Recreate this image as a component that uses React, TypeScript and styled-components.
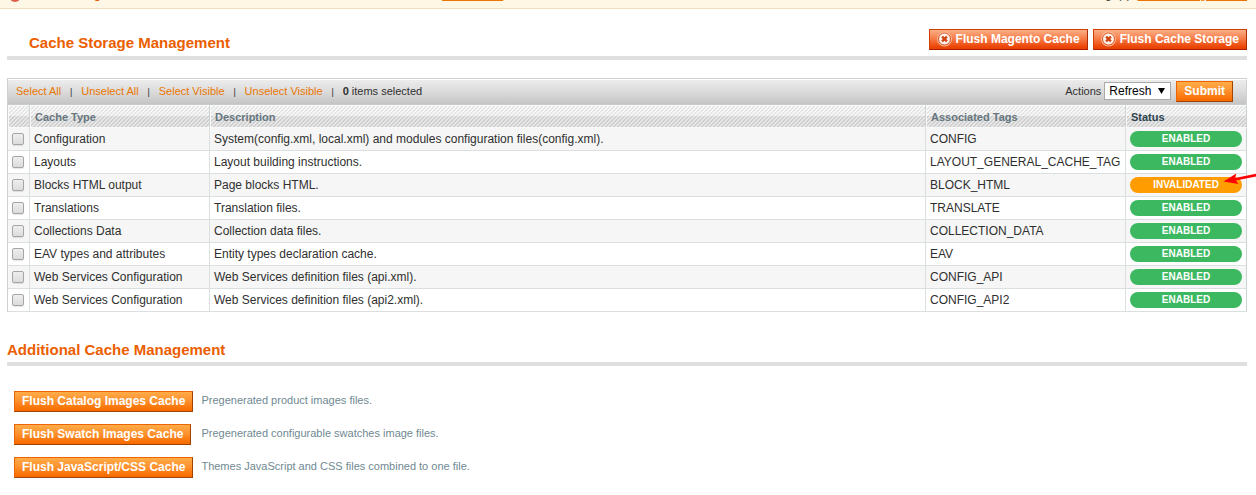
import React, { useState } from 'react';
import styled, { createGlobalStyle } from 'styled-components';

const GlobalStyle = createGlobalStyle`
  *, *::before, *::after { box-sizing: border-box; }
  body {
    margin: 0;
    background: #fff;
    color: #2f2f2f;
    font: 12px/16px "Liberation Sans", Arial, Helvetica, sans-serif;
  }
`;

const Notice = styled.div`
  display: flex;
  justify-content: space-between;
  align-items: flex-end;
  height: 9px;
  padding: 0 9px 6px;
  overflow: hidden;
  background: #fff7e5;
  border-bottom: 1px solid #f0dfb8;
  font-size: 11px;
  line-height: 14px;
  white-space: nowrap;
`;

const NoticeGroup = styled.div`
  display: flex;
  align-items: flex-end;
  gap: 4px;
`;

const NoticeDot = styled.span`
  width: 12px;
  height: 14px;
  border: 2px solid #d8604c;
  border-radius: 6px;
`;

const NoticeTitle = styled.strong`
  width: 413px;
  color: #eb5e00;
`;

const TextLink = styled.a`
  color: #ea7601;
  text-decoration: ${(p: { $underlined?: boolean }) => (p.$underlined ? 'underline' : 'none')};
`;

const Main = styled.main`
  padding: 20px 9px 14px 7px;
`;

const SectionHead = styled.header<{ $indent?: boolean }>`
  display: flex;
  justify-content: space-between;
  align-items: flex-start;
  padding-left: ${(p) => (p.$indent ? 22 : 0)}px;
  padding-bottom: ${(p) => (p.$indent ? 3 : 2)}px;
  border-bottom: 4px solid #dfdfdf;
`;

const Title = styled.h3`
  margin: 0;
  padding-top: 4px;
  color: #eb5e00;
  font-size: 15px;
  line-height: 20px;
`;

const ButtonGroup = styled.div`
  display: flex;
  gap: 5px;
`;

const Button = styled.button<{ $danger?: boolean }>`
  display: inline-flex;
  align-items: center;
  justify-self: start;
  gap: 4px;
  height: 21px;
  padding: 0 7px 1px;
  border: 1px solid;
  border-color: ${(p) => (p.$danger ? '#d13f00 #b02b00 #a92000 #d13f00' : '#ed6502 #a04300 #a04300 #ed6502')};
  background: ${(p) =>
    p.$danger
      ? 'linear-gradient(#fbae85 0%, #f77d49 45%, #ec4a0c 85%, #e84000 100%)'
      : 'linear-gradient(#ffac47 0%, #fd9230 45%, #f97408 85%, #f56a00 100%)'};
  color: #fff;
  font: bold 12px/16px "Liberation Sans", Arial, Helvetica, sans-serif;
  white-space: nowrap;
  cursor: pointer;
`;

const Grid = styled.section`
  margin-top: 18px;
  border: solid #ccd1d1;
  border-width: 1px 0 0 1px;
`;

const Toolbar = styled.div`
  display: flex;
  justify-content: space-between;
  align-items: center;
  height: 26px;
  padding: 0 13px 3px 8px;
  border-top: 1px solid #fff;
  border-right: 1px solid #ccd1d1;
  background: linear-gradient(#ececec 0%, #dcdcdc 45%, #c5c5c5 96%, #ccd1d1 100%);
  font-size: 11px;
`;

const SelectLinks = styled.div`
  display: flex;
  align-items: center;
`;

const Divider = styled.span`
  width: 20px;
  padding-top: 1px;
  font-size: 9px;
  text-align: center;
`;

const Actions = styled.div`
  display: flex;
  align-items: center;
  gap: 5px;
`;

const ActionField = styled.div`
  display: flex;
  align-items: center;
  gap: 3px;
`;

const SelectBox = styled.span`
  position: relative;
  display: flex;
`;

const Select = styled.select`
  appearance: none;
  width: 67px;
  height: 18px;
  padding: 0 4px;
  border: 1px solid #aaa;
  border-radius: 0;
  background: #fff;
  color: #000;
  font: 12px/16px "Liberation Sans", Arial, Helvetica, sans-serif;
`;

const Caret = styled.svg`
  position: absolute;
  top: 6px;
  right: 6px;
  pointer-events: none;
`;

const Table = styled.table`
  width: 100%;
  table-layout: fixed;
  border-collapse: separate;
  border-spacing: 0;
`;

const HeadCell = styled.th<{ $dark?: boolean }>`
  height: 23px;
  padding: 1px 4px 0;
  border: solid;
  border-width: 1px 1px 1px 1px;
  border-color: #f9f9f9 #ccd1d1 #f9f9f9 #f9f9f9;
  background:
    linear-gradient(
      135deg,
      rgba(255, 255, 255, 0.45) 0 25%,
      rgba(170, 170, 170, 0.16) 25% 50%,
      rgba(255, 255, 255, 0.45) 50% 75%,
      rgba(170, 170, 170, 0.16) 75%
    ) 0 0 / 4px 4px,
    linear-gradient(#f1f1f1 0 10px, #d6d6d6 10px);
  color: ${(p) => (p.$dark ? '#2d444f' : '#67767e')};
  font-size: 11px;
  line-height: 16px;
  text-align: left;
`;

const Cell = styled.td`
  position: relative;
  height: 23px;
  padding: 2px 4px;
  border: solid #dadfe0;
  border-width: 0 1px 1px 0;
  white-space: nowrap;

  &:last-child { border-right-color: #ccd1d1; }
  tr:nth-child(odd) > & { background: #f6f6f6; }
`;

const Checkbox = styled.input`
  appearance: none;
  display: block;
  width: 12px;
  height: 12px;
  margin: 0;
  border: 1px solid #a5a5a5;
  border-radius: 2px;
  background: linear-gradient(#eeeeee, #dcdcdc);
  box-shadow: 0 1px 1px rgba(0, 0, 0, 0.1);

  &:checked { background: #6d7f88; }
`;

const Pill = styled.span<{ $invalid?: boolean }>`
  display: block;
  height: 16px;
  margin: 1px 0;
  border-radius: 8px;
  background: ${(p) => (p.$invalid ? '#ff9c00' : '#3cb861')};
  color: #fff;
  font-size: 10px;
  font-weight: bold;
  line-height: 16px;
  text-align: center;
  text-transform: uppercase;
`;

const Arrow = styled.svg`
  position: absolute;
  top: -2px;
  right: -10px;
  z-index: 1;
`;

const Additional = styled.section`
  margin-top: 24px;
`;

const FlushList = styled.div`
  display: grid;
  grid-template-columns: auto 1fr;
  gap: 12px 8px;
  padding: 25px 7px 0;
`;

const Hint = styled.p`
  margin: 0;
  padding-top: 1px;
  color: #6f8992;
  font-size: 11px;
`;

const Footer = styled.footer`
  height: 2px;
  background: #fcfcfc;
`;

const cacheRows = [
  ['Configuration', 'System(config.xml, local.xml) and modules configuration files(config.xml).', 'CONFIG', 'Enabled'],
  ['Layouts', 'Layout building instructions.', 'LAYOUT_GENERAL_CACHE_TAG', 'Enabled'],
  ['Blocks HTML output', 'Page blocks HTML.', 'BLOCK_HTML', 'Invalidated'],
  ['Translations', 'Translation files.', 'TRANSLATE', 'Enabled'],
  ['Collections Data', 'Collection data files.', 'COLLECTION_DATA', 'Enabled'],
  ['EAV types and attributes', 'Entity types declaration cache.', 'EAV', 'Enabled'],
  ['Web Services Configuration', 'Web Services definition files (api.xml).', 'CONFIG_API', 'Enabled'],
  ['Web Services Configuration', 'Web Services definition files (api2.xml).', 'CONFIG_API2', 'Enabled'],
];

const flushActions = [
  ['Flush Catalog Images Cache', 'Pregenerated product images files.'],
  ['Flush Swatch Images Cache', 'Pregenerated configurable swatches image files.'],
  ['Flush JavaScript/CSS Cache', 'Themes JavaScript and CSS files combined to one file.'],
];

const CrossIcon = () => (
  <svg width="15" height="16" viewBox="0 0 15 16" aria-hidden="true">
    <circle cx="7.5" cy="8" r="6.9" fill="none" stroke="#fbbd9f" strokeWidth="1.1" />
    <circle cx="7.5" cy="8" r="6" fill="#fdf1ec" stroke="#dc4f1c" strokeWidth="0.9" />
    <path d="M5.1 5.6 9.9 10.4M9.9 5.6 5.1 10.4" stroke="#cf4310" strokeWidth="2.3" />
  </svg>
);

export default function App() {
  const [selected, setSelected] = useState<number[]>([]);
  const all = cacheRows.map((_, i) => i);
  const choose = (rows: number[]) => (e: React.MouseEvent) => {
    e.preventDefault();
    setSelected(rows);
  };
  const toggle = (i: number) =>
    setSelected((s) => (s.includes(i) ? s.filter((n) => n !== i) : [...s, i]));

  return (
    <>
      <GlobalStyle />
      <Notice>
        <NoticeGroup>
          <NoticeDot />
          <NoticeTitle>Latest Message:</NoticeTitle>
          <TextLink $underlined href="#details">Read details</TextLink>
        </NoticeGroup>
        <NoticeGroup>
          <span>unread message(s).</span>
          <TextLink $underlined href="#inbox">Go to messages inbox</TextLink>
        </NoticeGroup>
      </Notice>
      <Main>
        <SectionHead $indent>
          <Title>Cache Storage Management</Title>
          <ButtonGroup>
            <Button $danger type="button"><CrossIcon />Flush Magento Cache</Button>
            <Button $danger type="button"><CrossIcon />Flush Cache Storage</Button>
          </ButtonGroup>
        </SectionHead>

        <Grid>
          <Toolbar>
            <SelectLinks>
              <TextLink href="#all" onClick={choose(all)}>Select All</TextLink>
              <Divider>|</Divider>
              <TextLink href="#none" onClick={choose([])}>Unselect All</TextLink>
              <Divider>|</Divider>
              <TextLink href="#visible" onClick={choose(all)}>Select Visible</TextLink>
              <Divider>|</Divider>
              <TextLink href="#hidden" onClick={choose([])}>Unselect Visible</TextLink>
              <Divider>|</Divider>
              <span><strong>{selected.length}</strong> items selected</span>
            </SelectLinks>
            <Actions>
              <ActionField>
                <label htmlFor="action">Actions</label>
                <SelectBox>
                  <Select id="action" defaultValue="refresh">
                    <option value="enable">Enable</option>
                    <option value="disable">Disable</option>
                    <option value="refresh">Refresh</option>
                  </Select>
                  <Caret width="7" height="6" viewBox="0 0 7 6" aria-hidden="true">
                    <path d="M0 0H7L3.5 6Z" fill="#000" />
                  </Caret>
                </SelectBox>
              </ActionField>
              <Button type="button">Submit</Button>
            </Actions>
          </Toolbar>
          <Table>
            <colgroup>
              <col style={{ width: 22 }} />
              <col style={{ width: 180 }} />
              <col />
              <col style={{ width: 200 }} />
              <col style={{ width: 121 }} />
            </colgroup>
            <thead>
              <tr>
                <HeadCell />
                <HeadCell>Cache Type</HeadCell>
                <HeadCell>Description</HeadCell>
                <HeadCell>Associated Tags</HeadCell>
                <HeadCell $dark>Status</HeadCell>
              </tr>
            </thead>
            <tbody>
              {cacheRows.map(([type, description, tag, status], i) => (
                <tr key={tag}>
                  <Cell>
                    <Checkbox
                      type="checkbox"
                      aria-label={type}
                      checked={selected.includes(i)}
                      onChange={() => toggle(i)}
                    />
                  </Cell>
                  <Cell>{type}</Cell>
                  <Cell>{description}</Cell>
                  <Cell>{tag}</Cell>
                  <Cell>
                    <Pill $invalid={status === 'Invalidated'}>{status}</Pill>
                    {status === 'Invalidated' && (
                      <Arrow width="33" height="15" viewBox="0 0 33 15" aria-hidden="true">
                        <path d="M0.5 9.5 13.3 1.6 12.2 6 33 1.8V4.4L12.8 8.6 15.5 12Z" fill="#f00" />
                      </Arrow>
                    )}
                  </Cell>
                </tr>
              ))}
            </tbody>
          </Table>
        </Grid>

        <Additional>
          <SectionHead>
            <Title>Additional Cache Management</Title>
          </SectionHead>
          <FlushList>
            {flushActions.map(([label, hint]) => (
              <React.Fragment key={label}>
                <Button type="button">{label}</Button>
                <Hint>{hint}</Hint>
              </React.Fragment>
            ))}
          </FlushList>
        </Additional>
      </Main>
      <Footer />
    </>
  );
}
